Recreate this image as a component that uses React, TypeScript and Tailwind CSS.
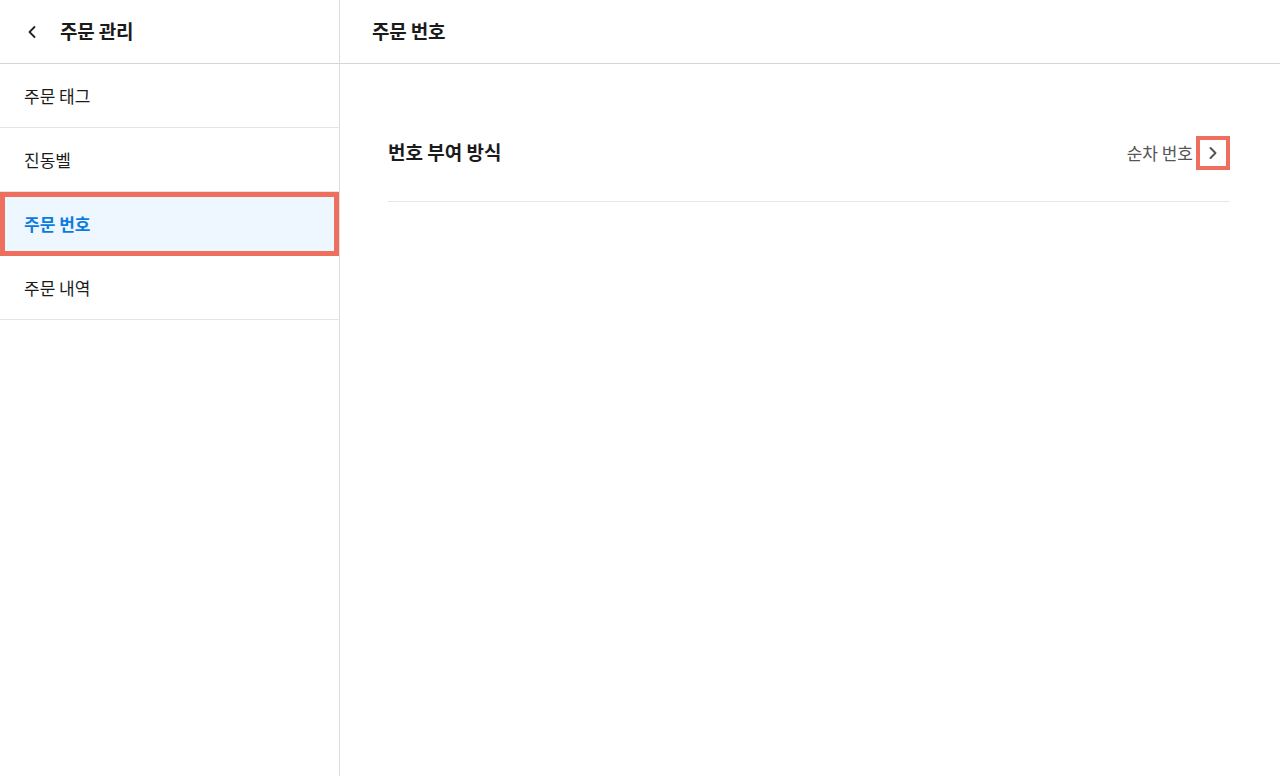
import { ChevronLeft, ChevronRight } from 'lucide-react'

const MENU = ['주문 태그', '진동벨', '주문 번호', '주문 내역']
const ACTIVE = '주문 번호'

export default function App() {
  return (
    <div
      className="flex h-[776px] w-full bg-white text-[#1b1b1b]"
      style={{ fontFamily: '"Noto Sans CJK KR", "Noto Sans", sans-serif' }}
    >
      {/* 사이드바 */}
      <aside className="flex w-[340px] shrink-0 flex-col border-r border-[#dcdcdc]">
        <div className="flex h-16 items-center border-b border-[#d4d4d4] pl-[22px]">
          <ChevronLeft className="h-5 w-5 text-[#222]" strokeWidth={2.2} />
          <h1 className="ml-[18px] text-[19px] font-bold tracking-[-0.2px]">주문 관리</h1>
        </div>
        {MENU.map((m) =>
          m === ACTIVE ? (
            <div
              key={m}
              className="flex h-16 items-center border-[5px] border-[#ef6f5e] bg-[#eef6ff] pl-[19px] text-[17px] font-semibold text-[#0a7ce0]"
            >
              {m}
            </div>
          ) : (
            <div key={m} className="flex h-16 items-center border-b border-[#e4e4e4] pl-6 text-[17px]">
              {m}
            </div>
          ),
        )}
      </aside>

      {/* 본문 */}
      <main className="flex flex-1 flex-col">
        <div className="flex h-16 items-center border-b border-[#d4d4d4] pl-8">
          <h2 className="text-[19px] font-bold tracking-[-0.2px]">주문 번호</h2>
        </div>
        <div className="pl-12 pr-[50px] pt-10">
          <div className="flex h-[98px] items-center justify-between border-b border-[#e6e6e6]">
            <div className="text-[19px] font-semibold">번호 부여 방식</div>
            <div className="flex items-center gap-[3px]">
              <span className="text-[17px] text-[#555]">순차 번호</span>
              <button className="flex h-[34px] w-[34px] items-center justify-center border-4 border-[#ef6f5e] bg-white">
                <ChevronRight className="h-5 w-5 text-[#555]" strokeWidth={2.4} />
              </button>
            </div>
          </div>
        </div>
      </main>
    </div>
  )
}
